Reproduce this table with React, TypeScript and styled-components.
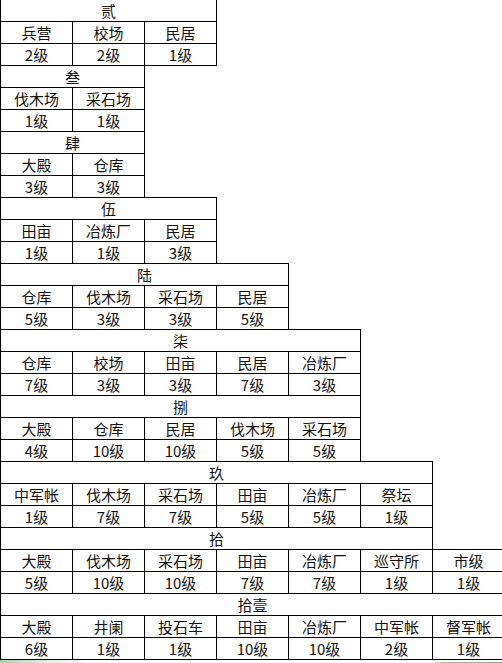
import React from 'react';
import styled, { createGlobalStyle } from 'styled-components';

const GlobalStyle = createGlobalStyle`
  html, body {
    margin: 0;
    padding: 0;
    background: #fff;
  }
  body {
    font-family: "Noto Sans CJK SC", "Noto Sans", sans-serif;
    color: #111;
    overflow: hidden;
  }
`;

interface Building {
  name: string;
  level: string;
}

interface Stage {
  title: string;
  span?: number;
  items: Building[];
}

const b = (name: string, level: string): Building => ({ name, level });

const stages: Stage[] = [
  { title: '贰', items: [b('兵营', '2级'), b('校场', '2级'), b('民居', '1级')] },
  { title: '叁', items: [b('伐木场', '1级'), b('采石场', '1级')] },
  { title: '肆', items: [b('大殿', '3级'), b('仓库', '3级')] },
  { title: '伍', items: [b('田亩', '1级'), b('冶炼厂', '1级'), b('民居', '3级')] },
  { title: '陆', items: [b('仓库', '5级'), b('伐木场', '3级'), b('采石场', '3级'), b('民居', '5级')] },
  {
    title: '柒',
    items: [b('仓库', '7级'), b('校场', '3级'), b('田亩', '3级'), b('民居', '7级'), b('冶炼厂', '3级')],
  },
  {
    title: '捌',
    items: [b('大殿', '4级'), b('仓库', '10级'), b('民居', '10级'), b('伐木场', '5级'), b('采石场', '5级')],
  },
  {
    title: '玖',
    items: [
      b('中军帐', '1级'), b('伐木场', '7级'), b('采石场', '7级'),
      b('田亩', '5级'), b('冶炼厂', '5级'), b('祭坛', '1级'),
    ],
  },
  {
    title: '拾',
    span: 6,
    items: [
      b('大殿', '5级'), b('伐木场', '10级'), b('采石场', '10级'), b('田亩', '7级'),
      b('冶炼厂', '7级'), b('巡守所', '1级'), b('市级', '1级'),
    ],
  },
  {
    title: '拾壹',
    items: [
      b('大殿', '6级'), b('井阑', '1级'), b('投石车', '1级'), b('田亩', '10级'),
      b('冶炼厂', '10级'), b('中军帐', '2级'), b('督军帐', '1级'),
    ],
  },
];

const Sheet = styled.div`
  display: flex;
  flex-direction: column;
  align-items: flex-start;
  width: 502px;
  height: 663px;
  overflow: hidden;
`;

const Section = styled.div<{ $cols: number }>`
  display: grid;
  grid-template-columns: repeat(${p => p.$cols}, 72px);
  border-left: 1px solid #000;
  margin-top: -1px;
`;

const Cell = styled.div`
  box-sizing: border-box;
  height: 22px;
  border-right: 1px solid #000;
  border-bottom: 1px solid #000;
  font-size: 15px;
  line-height: 21px;
  text-align: center;
  white-space: nowrap;
`;

const HeadCell = styled(Cell)<{ $span: number }>`
  grid-column: span ${p => p.$span};
  height: 23px;
  border-top: 1px solid #000;
`;

const EmptyHead = styled.div`
  box-sizing: border-box;
  border-bottom: 1px solid #000;
`;

const Strip = styled.div`
  width: 502px;
  height: 4px;
  background:
    linear-gradient(to right, rgba(255,255,255,0) 430px, #9cc79c 445px, #7bb37b 502px) bottom / 100% 1px no-repeat,
    linear-gradient(to right, #a9d3a9 0, #d6ebd6 40px, #ffffff 90px);
`;

export default function App() {
  return (
    <>
      <GlobalStyle />
      <Sheet>
        {stages.map(stage => {
          const cols = stage.items.length;
          const span = stage.span ?? cols;
          return (
            <Section key={stage.title} $cols={cols}>
              <HeadCell $span={span}>{stage.title}</HeadCell>
              {span < cols && <EmptyHead style={{ gridColumn: `span ${cols - span}` }} />}
              {stage.items.map((it, i) => (
                <Cell key={'n' + i}>{it.name}</Cell>
              ))}
              {stage.items.map((it, i) => (
                <Cell key={'l' + i}>{it.level}</Cell>
              ))}
            </Section>
          );
        })}
        <Strip />
      </Sheet>
    </>
  );
}
